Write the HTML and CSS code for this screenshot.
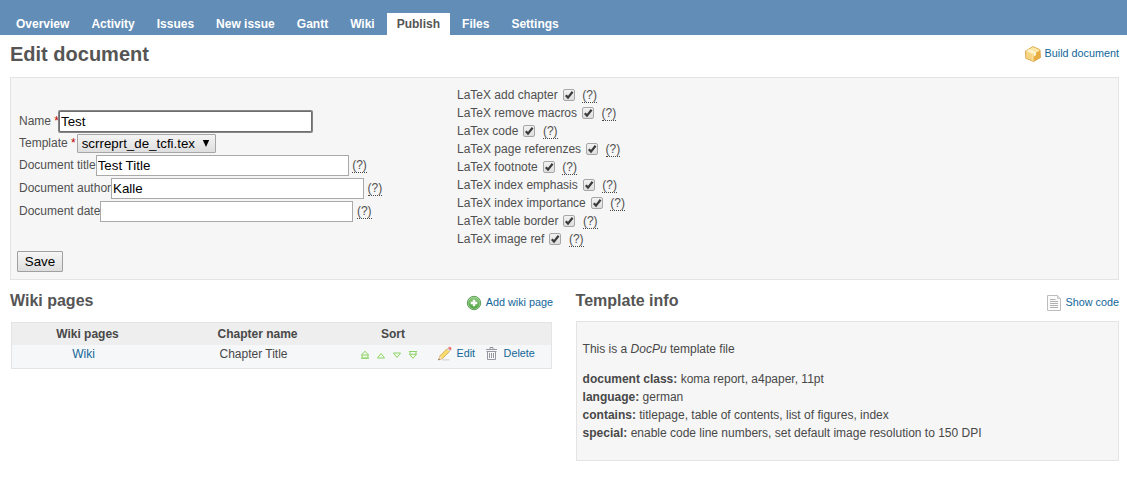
FILE: index.html
```html
<!DOCTYPE html>
<html lang="en">
<head>
<meta charset="utf-8">
<title>Edit document</title>
<link rel="stylesheet" href="styles.css">
</head>
<body>
<nav class="main-menu">
  <a>Overview</a><a>Activity</a><a>Issues</a><a>New issue</a><a>Gantt</a><a>Wiki</a><a class="selected">Publish</a><a>Files</a><a>Settings</a>
</nav>
<main>
  <header class="title-row">
    <h2>Edit document</h2>
    <a class="action build"><svg width="16" height="16" viewBox="0 0 16 16"><path d="M8 .6 15 3.7 15.4 11.6 8.5 15.5.8 12.3.5 5z" fill="#edb94e" stroke="#cf9536" stroke-width=".8"/><path d="M1 5 8 1.1 14.7 4 8 7.8z" fill="#fce7a5"/><path d="M1 5.3 8 8.2V15L1.2 12z" fill="#f6d481"/><path d="M8.3 8 14.8 4.3 15 11.5 8.3 15z" fill="#e8ad40"/><path d="M4 3.3 11 6.4V9.3L8.8 10.4V7.7L2.4 4.5z" fill="#fff6d8"/><path d="M1 5 8 8 14.7 4M8 8v7" fill="none" stroke="#fff0bd" stroke-width=".8"/></svg>Build document</a>
  </header>

  <form class="box form-box">
    <div class="columns">
      <div class="fields">
        <div class="field name"><label>Name <b class="req">*</b></label><input type="text" class="focused" value="Test"></div>
        <div class="field template"><label>Template <b class="req">*</b></label><span class="select">scrreprt_de_tcfi.tex<svg width="8" height="8" viewBox="0 0 8 8"><path d="M.8 0h6.4L4 7z" fill="#000"/></svg></span></div>
        <div class="field"><label>Document title</label><input type="text" value="Test Title"><span class="help">(?)</span></div>
        <div class="field"><label>Document author</label><input type="text" value="Kalle"><span class="help">(?)</span></div>
        <div class="field"><label>Document date</label><input type="text" value=""><span class="help">(?)</span></div>
      </div>
      <div class="flags">
        <div class="flag">LaTeX add chapter<i class="check"><svg viewBox="0 0 12 12"><path d="M2.8 6.2 5 8.6 9.6 2.8"/></svg></i><span class="help">(?)</span></div>
        <div class="flag">LaTeX remove macros<i class="check"><svg viewBox="0 0 12 12"><path d="M2.8 6.2 5 8.6 9.6 2.8"/></svg></i><span class="help">(?)</span></div>
        <div class="flag">LaTex code<i class="check"><svg viewBox="0 0 12 12"><path d="M2.8 6.2 5 8.6 9.6 2.8"/></svg></i><span class="help">(?)</span></div>
        <div class="flag">LaTeX page referenzes<i class="check"><svg viewBox="0 0 12 12"><path d="M2.8 6.2 5 8.6 9.6 2.8"/></svg></i><span class="help">(?)</span></div>
        <div class="flag">LaTeX footnote<i class="check"><svg viewBox="0 0 12 12"><path d="M2.8 6.2 5 8.6 9.6 2.8"/></svg></i><span class="help">(?)</span></div>
        <div class="flag">LaTeX index emphasis<i class="check"><svg viewBox="0 0 12 12"><path d="M2.8 6.2 5 8.6 9.6 2.8"/></svg></i><span class="help">(?)</span></div>
        <div class="flag">LaTeX index importance<i class="check"><svg viewBox="0 0 12 12"><path d="M2.8 6.2 5 8.6 9.6 2.8"/></svg></i><span class="help">(?)</span></div>
        <div class="flag">LaTeX table border<i class="check"><svg viewBox="0 0 12 12"><path d="M2.8 6.2 5 8.6 9.6 2.8"/></svg></i><span class="help">(?)</span></div>
        <div class="flag">LaTeX image ref<i class="check"><svg viewBox="0 0 12 12"><path d="M2.8 6.2 5 8.6 9.6 2.8"/></svg></i><span class="help">(?)</span></div>
      </div>
    </div>
    <button type="button" class="save">Save</button>
  </form>

  <div class="split">
    <section class="pages">
      <div class="section-head">
        <h3>Wiki pages</h3>
        <a class="action add"><svg width="16" height="16" viewBox="0 0 16 16"><defs><linearGradient id="green" x2="0" y2="1"><stop stop-color="#8cc97e"/><stop offset="1" stop-color="#4da33f"/></linearGradient></defs><circle cx="8" cy="8" r="6.7" fill="#b4dcab" stroke="#50934a" stroke-width=".9"/><circle cx="8" cy="8" r="5.8" fill="url(#green)"/><path d="M8 4.7v6.6M4.7 8h6.6" stroke="#fff" stroke-width="2.4"/></svg>Add wiki page</a>
      </div>
      <div class="list">
        <div class="list-head"><b>Wiki pages</b><b>Chapter name</b><b>Sort</b><b></b></div>
        <div class="list-row">
          <a>Wiki</a>
          <span>Chapter Title</span>
          <span class="sort">
            <svg width="10" height="10" viewBox="0 0 10 10"><path d="M5 1.2 8.6 5H1.4zM2 5.2V8h6V5.2M1 8.3h8"/></svg>
            <svg width="10" height="10" viewBox="0 0 10 10"><path d="M5 3.5 8.6 8H1.4z"/></svg>
            <svg width="10" height="10" viewBox="0 0 10 10"><path d="M5 7.5 8.6 3H1.4z"/></svg>
            <svg width="10" height="10" viewBox="0 0 10 10"><path d="M1 1.5h8M2 1.5v2.8M8 1.5v2.8M1.4 4.3h7.2L5 8.3z"/></svg>
          </span>
          <span class="buttons">
            <a><svg width="16" height="16" viewBox="0 0 16 16"><path d="M5 13.8h7.5" stroke="#ddd" stroke-width="1.5"/><path d="M1.5 14 3 9.8 10.2 2.6 12.8 5.2 5.6 12.4z" fill="#f9dc6e" stroke="#cfa150" stroke-width=".8"/><path d="M1.5 14 2.9 10.2 5.3 12.3z" fill="#f5dfc1"/><path d="M1.2 14.2 2 12.4 3 13.3z" fill="#555"/><path d="M9.8 3 11.2 1.6 13.8 4.2 12.4 5.6z" fill="#d4dce0"/><path d="M11 1.9 12 .9Q14.8.4 14.4 3.6L13.4 4.5z" fill="#ed7777"/></svg>Edit</a>
            <a><svg width="16" height="16" viewBox="0 0 16 16"><path d="M6 3V1.5h3V3M2 3.5h11M2.5 5.5h10M3.5 6v7.5h8V6M5.5 7v5M7.5 7v5M9.5 7v5" fill="none" stroke="#8b8b98" stroke-width=".9"/></svg>Delete</a>
          </span>
        </div>
      </div>
    </section>
    <section class="info">
      <div class="section-head">
        <h3>Template info</h3>
        <a class="action code"><svg width="16" height="16" viewBox="0 0 16 16"><path d="M1.5.5h10l3 3v12h-13z" fill="#fbfbfb" stroke="#bdbdbd"/><path d="M11.5.5v3h3" fill="#e6e6e6" stroke="#c8c8c8"/><path d="M4 4.5h5.5M4 6.5h8M4 8.5h8M4 10.5h8M4 12.5h8" stroke="#b0b0b0"/></svg>Show code</a>
      </div>
      <div class="box info-box">
        <p>This is a <em>DocPu</em> template file</p>
        <p><b>document class:</b> koma report, a4paper, 11pt<br><b>language:</b> german<br><b>contains:</b> titlepage, table of contents, list of figures, index<br><b>special:</b> enable code line numbers, set default image resolution to 150 DPI</p>
      </div>
    </section>
  </div>
</main>
</body>
</html>
```
FILE: styles.css
```css
* { box-sizing: border-box; }
body {
  margin: 0;
  background: #fff;
  color: #484848;
  font: 12px/18px "Liberation Sans", Arial, sans-serif;
}
svg { display: block; flex: none; }
a { color: #116699; }
h2, h3 { margin: 0; color: #555; font-weight: bold; }
h2 { font-size: 20px; line-height: 24px; }
h3 { font-size: 16px; line-height: 20px; }

.main-menu {
  display: flex;
  gap: 2px;
  height: 35px;
  padding: 13px 6px 0;
  background: #628db6;
}
.main-menu a {
  padding: 2px 10px;
  color: #fff;
  font-weight: bold;
}
.main-menu .selected { background: #fff; color: #555; }

main { padding: 0 8px 0 10px; }
.title-row {
  display: flex;
  justify-content: space-between;
  height: 42px;
  padding-top: 7px;
}
.action {
  display: flex;
  height: 16px;
  font-size: 10.8px;
  line-height: 16px;
}
.build { gap: 4px; margin-top: 3px; }
.build svg { margin-top: 1px; }

.box { background: #f6f6f6; border: 1px solid #e4e4e4; }
.form-box { height: 203px; padding: 8px 6px 0; color: #505050; }
.columns { display: flex; height: 165px; }
.fields {
  width: 438px;
  padding: 25px 0 0 2px;
}
.field { display: flex; height: 23px; }
.field.template { height: 21px; }
.field label { padding-top: 1px; }
.field.template label { padding-top: 0; }
.req { color: #bb0000; font-weight: normal; }
.field input {
  width: 253px;
  height: 21px;
  margin: 0;
  padding: 1px;
  border: 1px solid #a9a9a9;
  border-radius: 0;
  background: #fff;
  color: #000;
  font: 13.333px "Liberation Sans", Arial, sans-serif;
  outline: none;
}
.field .focused {
  border-color: #6f6f6f;
  box-shadow: 0 0 0 1px #858585;
  border-radius: 1px;
}
.field .help { height: 17px; margin: 1px 0 0 3.5px; }
.help { height: 17px; border-bottom: 1px dotted #484848; }
.select {
  display: flex;
  justify-content: space-between;
  width: 139px;
  height: 19px;
  margin-left: 1px;
  padding: 0 5px 0 4px;
  border: 1px solid #a6a6a6;
  border-radius: 1px;
  background: linear-gradient(#f4f4f4, #dedede);
  color: #000;
  font-size: 13.333px;
  line-height: 18px;
}
.select svg { margin-top: 5px; }

.flags { padding-left: 2px; }
.flag { display: flex; height: 18px; }
.check {
  width: 12px;
  height: 12px;
  margin: 3px 7.5px 0 5px;
  border: 1px solid #a6a6a6;
  border-radius: 2px;
  background: linear-gradient(#f2f2f2, #dedede);
}
.check svg { width: 12px; height: 12px; margin: -1px; fill: none; stroke: #3b3b3b; stroke-width: 2.2; }
.save {
  display: block;
  width: 46px;
  height: 21px;
  padding: 0;
  border: 1px solid #a0a0a0;
  border-radius: 1px;
  background: linear-gradient(#f6f6f6, #dedede);
  color: #000;
  font: 13.333px/19px "Liberation Sans", Arial, sans-serif;
}

.split { display: flex; padding-top: 11px; }
.pages { width: 543px; margin-right: 22.6px; }
.info { flex: 1; }
.section-head { display: flex; justify-content: space-between; height: 31px; }
.add, .code { gap: 4px; margin-top: 3px; }
.add svg, .code svg { margin-top: 1px; }

.list { margin: 0 1px; border: 1px solid #e4e4e4; color: #484848; }
.list-head, .list-row {
  display: grid;
  grid-template-columns: 151px 189px 82px 1fr;
  text-align: center;
}
.list-head { height: 22px; padding-top: 2px; background: #eee; }
.list-row { height: 23px; background: #f6f7f8; }
.list-row > a, .list-row > span { padding-right: 8px; }
.list-row .sort {
  display: flex;
  gap: 6px;
  padding: 5px 0 0 8px;
}
.sort path { fill: #f1faea; stroke: #8ed268; }
.list-row .buttons { display: flex; gap: 8.5px; padding: 0 0 0 2.5px; font-size: 10.8px; }
.buttons a { display: flex; gap: 4px; line-height: 16px; }
.buttons svg { margin-top: 1px; }

.info-box { height: 140px; margin-top: -1px; padding: 18px 6px; }
.info-box p { margin: 0 0 12px; }
```
